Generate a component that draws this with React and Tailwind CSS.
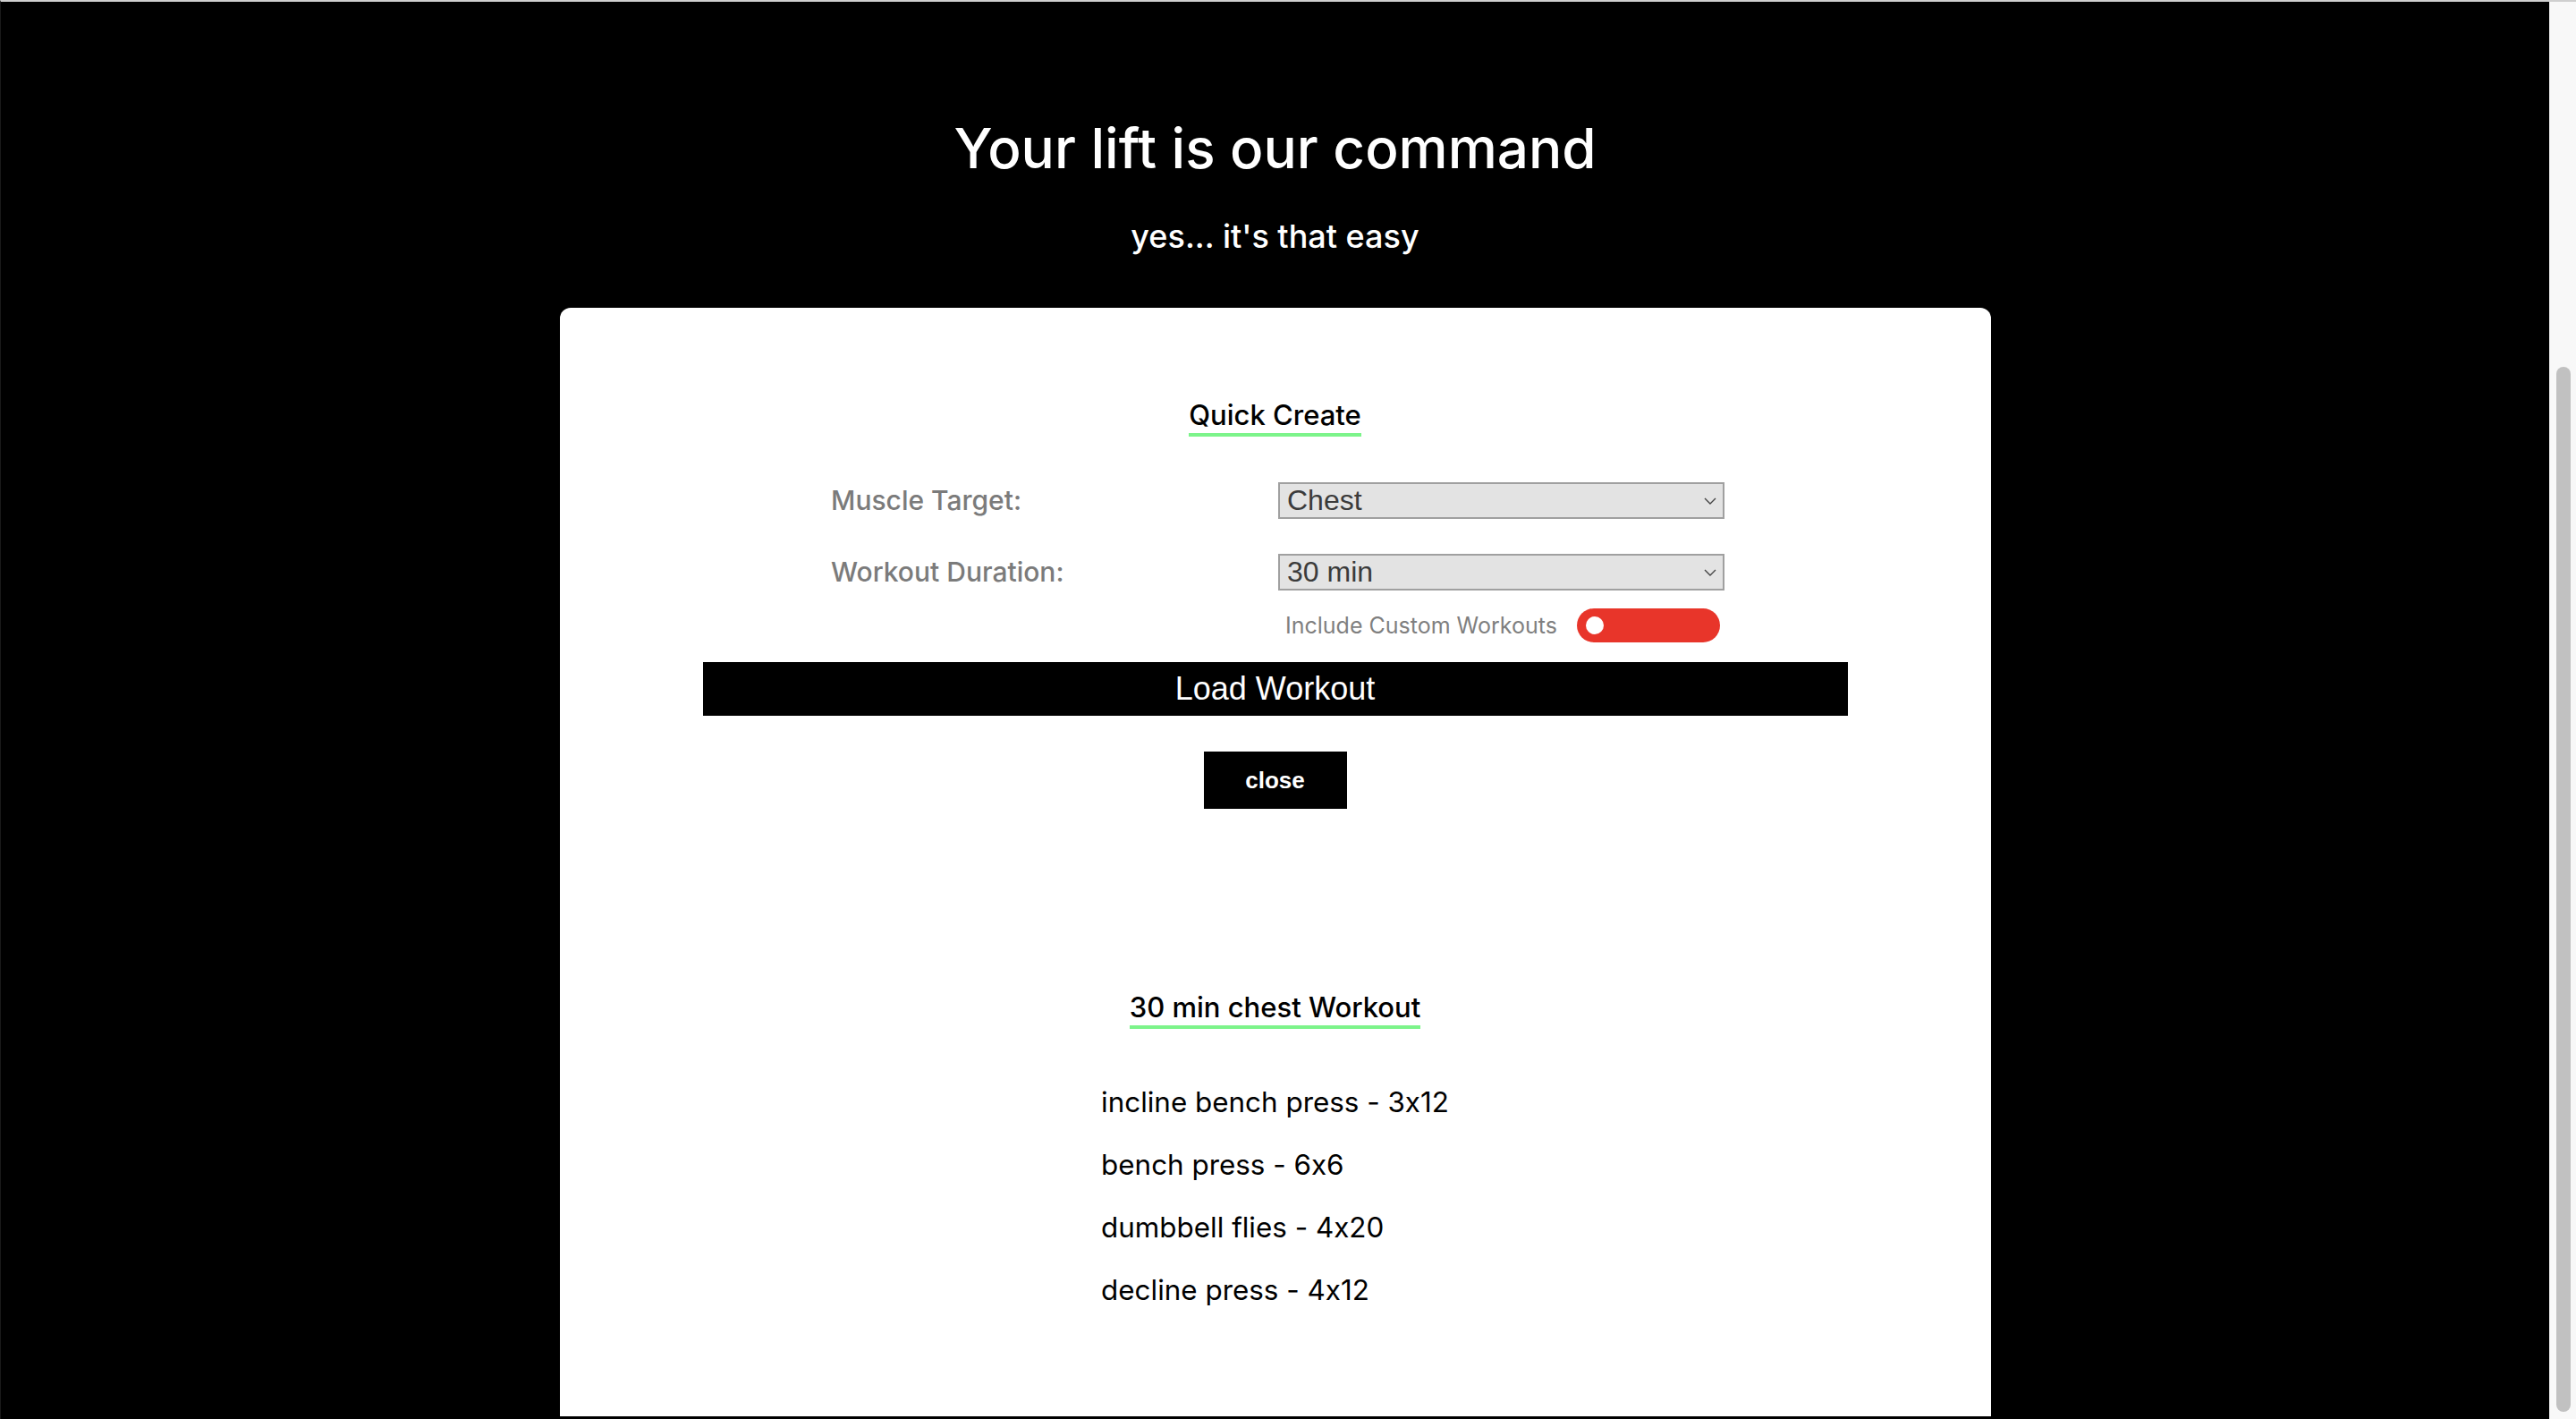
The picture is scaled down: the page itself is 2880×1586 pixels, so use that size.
import React from "react";

function Chevron() {
  return (
    <svg
      className="pointer-events-none absolute right-[9px] top-1/2 -translate-y-1/2"
      width="14"
      height="8"
      viewBox="0 0 14 8"
      fill="none"
    >
      <path d="M1 1L7 7L13 1" stroke="#444" strokeWidth="1.4" />
    </svg>
  );
}

function FakeSelect({ value }) {
  return (
    <div className="relative h-[41px] w-[499px]">
      <select
        defaultValue={value}
        className="h-full w-full appearance-none rounded-none border-2 border-[#a0a0a0] bg-[#e3e3e3] pl-[8px] font-['Liberation_Sans',Arial,sans-serif] text-[32px] leading-[37px] text-[#3b3b3b] outline-none"
      >
        <option>{value}</option>
      </select>
      <Chevron />
    </div>
  );
}

export default function App() {
  const items = [
    "incline bench press - 3x12",
    "bench press - 6x6",
    "dumbbell flies - 4x20",
    "decline press - 4x12",
  ];
  return (
    <div className="flex h-[1586px] w-[2880px] overflow-hidden border-t-2 border-l border-t-[#cfcfcf] border-l-[#1a1a1a] bg-black font-['Inter',sans-serif] [font-feature-settings:'calt'_0]">
      <main className="flex min-w-0 flex-1 flex-col items-center">
        <h1 className="mt-[126px] text-[62px] font-medium leading-[76px] text-white">
          Your lift is our command
        </h1>
        <p className="mt-[38px] text-[36px] font-medium leading-[44px] text-white">
          yes... it's that easy
        </p>
        <section className="mb-[3px] mt-[58px] flex w-[1600px] flex-1 flex-col items-center rounded-t-[12px] bg-white pt-[101px]">
          <h2 className="border-b-4 border-[#7cf48a] pb-[1px] text-[31px] font-medium leading-[38px] text-black">
            Quick Create
          </h2>

          <div className="mt-[51px] grid grid-cols-[500px_499px] items-center gap-y-[39px] pl-[6px]">
            <label className="text-[30px] font-medium leading-[41px] text-[#7b7b7b]">
              Muscle Target:
            </label>
            <FakeSelect value="Chest" />
            <label className="text-[30px] font-medium leading-[41px] text-[#7b7b7b]">
              Workout Duration:
            </label>
            <FakeSelect value="30 min" />
          </div>
          <div className="mt-[20px] grid grid-cols-[500px_499px] pl-[6px]">
            <div />
            <div className="flex items-center gap-[22px] pl-[8px]">
              <span className="text-[25px] leading-[38px] text-[#7f7f7f]">
                Include Custom Workouts
              </span>
              <div className="flex h-[38px] w-[160px] items-center rounded-full bg-[#e8352a] pl-[10px]">
                <div className="h-[20px] w-[20px] rounded-full bg-white" />
              </div>
            </div>
          </div>

          <button className="mt-[22px] h-[60px] w-[1280px] bg-black font-['Liberation_Sans',Arial,sans-serif] text-[36px] leading-[60px] text-white">
            Load Workout
          </button>
          <button className="mt-[40px] h-[64px] w-[160px] bg-black font-['Liberation_Sans',Arial,sans-serif] text-[26px] font-bold text-white">
            close
          </button>

          <h2 className="mt-[203px] border-b-4 border-[#7cf48a] pb-[1px] text-[31px] font-medium leading-[38px] text-black">
            30 min chest Workout
          </h2>
          <ul className="mt-[63px] flex w-fit flex-col items-start gap-[32px]">
            {items.map((t) => (
              <li key={t} className="text-[31.4px] leading-[38px] text-black">
                {t}
              </li>
            ))}
          </ul>
        </section>
      </main>
      <div className="flex w-[30px] flex-col border-l border-[#ececec] bg-[#f8f8f8] pb-[8px] pl-[7px] pr-[5px] pt-[408px]">
        <div className="w-[16px] flex-1 rounded-full bg-[#c1c1c1]" />
      </div>
    </div>
  );
}
